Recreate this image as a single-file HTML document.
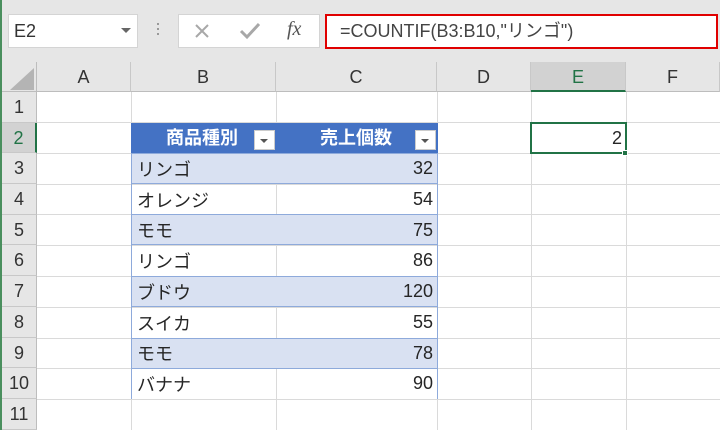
<!DOCTYPE html>
<html><head><meta charset="utf-8"><style>
*{margin:0;padding:0;box-sizing:border-box}
body{width:720px;height:430px;overflow:hidden;background:#fff;position:relative;font-family:"Liberation Sans","Noto Sans CJK JP",sans-serif;color:#262626}
.a{position:absolute}
.top{left:0;top:0;width:720px;height:62px;background:#e6e6e6}
.box{background:#fff;border:1px solid #d4d4d4}
.ch{top:62px;height:30px;background:#e6e6e6;border-right:1px solid #c8c8c8;border-bottom:1px solid #bdbdbd;font-size:18px;text-align:center;line-height:30px;color:#333}
.rh{left:2px;width:35px;background:#e6e6e6;border-bottom:1px solid #c8c8c8;border-right:1px solid #bdbdbd;font-size:18px;text-align:center;color:#333}
.vl{top:92px;width:1px;height:338px;background:#dadada}
.hl{left:37px;width:683px;height:1px;background:#dadada}
.c{font-size:18px;padding:0 4px 0 5px;display:flex;align-items:center}
.r{justify-content:flex-end}
</style></head><body>
<div class="a top"></div>
<div class="a" style="left:0;top:0;width:2px;height:430px;background:#4a8f5e"></div>
<div class="a box" style="left:8px;top:14px;width:130px;height:34px;font-size:18px;line-height:32px;padding-left:5px;color:#333">E2</div>
<div class="a" style="left:121px;top:28px;border:5px solid transparent;border-top:5px solid #666;border-bottom:0"></div>
<div class="a" style="left:157px;top:23px;width:2px;height:14px;background:repeating-linear-gradient(#999 0 2px,transparent 2px 5px)"></div>
<div class="a box" style="left:178px;top:14px;width:142px;height:34px"></div>
<svg class="a" style="left:193px;top:22px" width="18" height="18"><path d="M3 3L15 15M15 3L3 15" stroke="#a8a8a8" stroke-width="2"/></svg>
<svg class="a" style="left:238px;top:21px" width="24" height="20"><path d="M3 10L9 16L21 3" stroke="#a8a8a8" stroke-width="3" fill="none"/></svg>
<div class="a" style="left:287px;top:18px;font-size:20px;font-family:'Liberation Serif',serif;font-style:italic;color:#555">fx</div>
<div class="a" style="left:325px;top:14px;width:393px;height:35px;background:#fff;border:2px solid #e00000;font-size:18px;line-height:30px;padding-left:13px;color:#444">=COUNTIF(B3:B10,"リンゴ")</div>

<div class="a" style="left:2px;top:62px;width:35px;height:30px;background:#e6e6e6;border-right:1px solid #bdbdbd;border-bottom:1px solid #bdbdbd"></div>
<div class="a" style="left:10px;top:68px;width:0;height:0;border-left:24px solid transparent;border-bottom:22px solid #b4b4b4"></div>
<div class="a ch" style="left:37px;width:94px">A</div>
<div class="a ch" style="left:131px;width:145px">B</div>
<div class="a ch" style="left:276px;width:161px">C</div>
<div class="a ch" style="left:437px;width:94px">D</div>
<div class="a ch" style="left:531px;width:95px;background:#d2d2d2;border-bottom:2px solid #217346;color:#217346">E</div>
<div class="a ch" style="left:626px;width:94px">F</div>

<div class="a vl" style="left:131px"></div><div class="a vl" style="left:276px"></div><div class="a vl" style="left:437px"></div><div class="a vl" style="left:531px"></div><div class="a vl" style="left:626px"></div>
<div class="a hl" style="top:122px"></div><div class="a hl" style="top:153px"></div><div class="a hl" style="top:184px"></div><div class="a hl" style="top:214px"></div><div class="a hl" style="top:245px"></div><div class="a hl" style="top:276px"></div><div class="a hl" style="top:307px"></div><div class="a hl" style="top:338px"></div><div class="a hl" style="top:368px"></div><div class="a hl" style="top:399px"></div>

<div class="a rh" style="top:92px;height:31px;line-height:31px">1</div>
<div class="a rh" style="top:123px;height:30px;line-height:30px;background:#d2d2d2;color:#217346;border-right:2px solid #217346">2</div>
<div class="a rh" style="top:153px;height:31px;line-height:31px">3</div>
<div class="a rh" style="top:184px;height:31px;line-height:31px">4</div>
<div class="a rh" style="top:215px;height:30px;line-height:30px">5</div>
<div class="a rh" style="top:245px;height:31px;line-height:31px">6</div>
<div class="a rh" style="top:276px;height:31px;line-height:31px">7</div>
<div class="a rh" style="top:307px;height:31px;line-height:31px">8</div>
<div class="a rh" style="top:338px;height:30px;line-height:30px">9</div>
<div class="a rh" style="top:368px;height:31px;line-height:31px">10</div>
<div class="a rh" style="top:399px;height:31px;line-height:31px">11</div>

<div class="a" style="left:131px;top:123px;width:307px;height:30px;background:#4472c4"></div>
<div class="a" style="left:166px;top:125px;font-size:18px;font-weight:bold;color:#fff;line-height:26px">商品種別</div>
<div class="a" style="left:254px;top:130px;width:21px;height:20px;background:#fff;border:1px solid #ccc"></div>
<div class="a" style="left:260px;top:139px;border:4px solid transparent;border-top:4px solid #555;border-bottom:0"></div>
<div class="a" style="left:320px;top:125px;font-size:18px;font-weight:bold;color:#fff;line-height:26px">売上個数</div>
<div class="a" style="left:415px;top:130px;width:21px;height:20px;background:#fff;border:1px solid #ccc"></div>
<div class="a" style="left:421px;top:139px;border:4px solid transparent;border-top:4px solid #555;border-bottom:0"></div>

<div class="a" style="left:131px;top:153px;width:307px;height:31px;background:#d9e1f2;border-top:1px solid #8eaadb;border-bottom:1px solid #8eaadb"></div>
<div class="a" style="left:131px;top:214px;width:307px;height:31px;background:#d9e1f2;border-top:1px solid #8eaadb;border-bottom:1px solid #8eaadb"></div>
<div class="a" style="left:131px;top:276px;width:307px;height:31px;background:#d9e1f2;border-top:1px solid #8eaadb;border-bottom:1px solid #8eaadb"></div>
<div class="a" style="left:131px;top:338px;width:307px;height:31px;background:#d9e1f2;border-top:1px solid #8eaadb;border-bottom:1px solid #8eaadb"></div>
<div class="a" style="left:131px;top:153px;width:1px;height:246px;background:#8eaadb"></div>
<div class="a" style="left:437px;top:153px;width:1px;height:246px;background:#8eaadb"></div>

<div class="a c" style="left:132px;top:153px;height:31px">リンゴ</div><div class="a c r" style="left:276px;width:161px;top:153px;height:31px">32</div>
<div class="a c" style="left:132px;top:184px;height:31px">オレンジ</div><div class="a c r" style="left:276px;width:161px;top:184px;height:31px">54</div>
<div class="a c" style="left:132px;top:215px;height:30px">モモ</div><div class="a c r" style="left:276px;width:161px;top:215px;height:30px">75</div>
<div class="a c" style="left:132px;top:245px;height:31px">リンゴ</div><div class="a c r" style="left:276px;width:161px;top:245px;height:31px">86</div>
<div class="a c" style="left:132px;top:276px;height:31px">ブドウ</div><div class="a c r" style="left:276px;width:161px;top:276px;height:31px">120</div>
<div class="a c" style="left:132px;top:307px;height:31px">スイカ</div><div class="a c r" style="left:276px;width:161px;top:307px;height:31px">55</div>
<div class="a c" style="left:132px;top:338px;height:30px">モモ</div><div class="a c r" style="left:276px;width:161px;top:338px;height:30px">78</div>
<div class="a c" style="left:132px;top:368px;height:31px">バナナ</div><div class="a c r" style="left:276px;width:161px;top:368px;height:31px">90</div>

<div class="a c r" style="left:530px;top:122px;width:97px;height:32px;border:2px solid #217346;padding-right:3px">2</div>
<div class="a" style="left:622px;top:150px;width:6px;height:6px;background:#217346;border:1px solid #fff"></div>
</body></html>
